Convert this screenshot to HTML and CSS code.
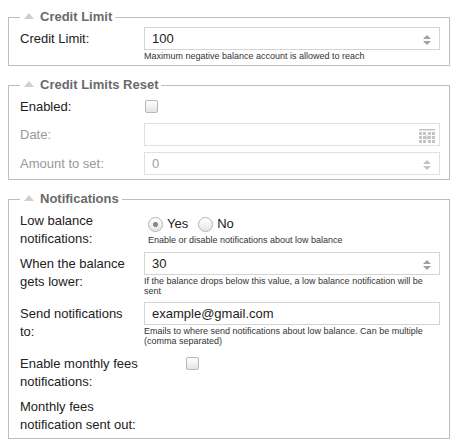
FILE: index.html
```html
<!DOCTYPE html>
<html>
<head>
<meta charset="utf-8">
<link rel="stylesheet" href="styles.css">
</head>
<body>
<div class="page">
  <fieldset class="group">
    <legend class="group-title"><svg class="caret" width="10" height="6" viewBox="0 0 10 6"><polygon points="0,6 5,0 10,6" fill="#cfcfcf"/></svg>Credit Limit</legend>
    <div class="row">
      <div class="row-label">Credit Limit:</div>
      <div class="row-field">
        <div class="input"><span>100</span><svg class="spin" width="8" height="10" viewBox="0 0 8 10"><polygon points="0,4 4,0 8,4" fill="#a0a0a0"/><polygon points="0,6 8,6 4,10" fill="#a0a0a0"/></svg></div>
        <div class="hint">Maximum negative balance account is allowed to reach</div>
      </div>
    </div>
  </fieldset>

  <fieldset class="group">
    <legend class="group-title"><svg class="caret" width="10" height="6" viewBox="0 0 10 6"><polygon points="0,6 5,0 10,6" fill="#cfcfcf"/></svg>Credit Limits Reset</legend>
    <div class="row">
      <div class="row-label">Enabled:</div>
      <div class="row-field">
        <div class="check"><input type="checkbox" class="box"></div>
      </div>
    </div>
    <div class="row">
      <div class="row-label muted">Date:</div>
      <div class="row-field">
        <div class="input disabled"><span></span><svg class="cal" width="16" height="14" viewBox="0 0 16 14"><g fill="#c4c4c4"><rect x="0" y="0" width="16" height="1.5"/><rect x="0" y="3" width="3" height="3"/><rect x="4" y="3" width="3" height="3"/><rect x="9" y="3" width="3" height="3"/><rect x="13" y="3" width="3" height="3"/><rect x="0" y="7" width="3" height="3"/><rect x="4" y="7" width="3" height="3"/><rect x="9" y="7" width="3" height="3"/><rect x="13" y="7" width="3" height="3"/><rect x="0" y="11" width="3" height="3"/><rect x="4" y="11" width="3" height="3"/><rect x="9" y="11" width="3" height="3"/><rect x="13" y="11" width="3" height="3"/><rect x="7.5" y="6" width="1" height="5"/><rect x="6" y="8" width="4" height="1"/></g></svg></div>
      </div>
    </div>
    <div class="row">
      <div class="row-label muted">Amount to set:</div>
      <div class="row-field">
        <div class="input disabled"><span>0</span><svg class="spin" width="8" height="10" viewBox="0 0 8 10"><polygon points="0,4 4,0 8,4" fill="#c4c4c4"/><polygon points="0,6 8,6 4,10" fill="#c4c4c4"/></svg></div>
      </div>
    </div>
  </fieldset>

  <fieldset class="group">
    <legend class="group-title"><svg class="caret" width="10" height="6" viewBox="0 0 10 6"><polygon points="0,6 5,0 10,6" fill="#cfcfcf"/></svg>Notifications</legend>
    <div class="row">
      <div class="row-label">Low balance notifications:</div>
      <div class="row-field">
        <div class="radios">
          <input type="radio" name="low" class="radio" checked><span class="radio-text">Yes</span>
          <input type="radio" name="low" class="radio"><span class="radio-text">No</span>
        </div>
        <div class="hint indented">Enable or disable notifications about low balance</div>
      </div>
    </div>
    <div class="row">
      <div class="row-label">When the balance gets lower:</div>
      <div class="row-field">
        <div class="input"><span>30</span><svg class="spin" width="8" height="10" viewBox="0 0 8 10"><polygon points="0,4 4,0 8,4" fill="#a0a0a0"/><polygon points="0,6 8,6 4,10" fill="#a0a0a0"/></svg></div>
        <div class="hint">If the balance drops below this value, a low balance notification will be<br>sent</div>
      </div>
    </div>
    <div class="row">
      <div class="row-label">Send notifications to:</div>
      <div class="row-field">
        <div class="input"><span>example@gmail.com</span></div>
        <div class="hint">Emails to where send notifications about low balance. Can be multiple<br>(comma separated)</div>
      </div>
    </div>
    <div class="row">
      <div class="row-label">Enable monthly fees notifications:</div>
      <div class="row-field">
        <div class="check shifted"><input type="checkbox" class="box"></div>
      </div>
    </div>
    <div class="row row-last">
      <div class="row-label">Monthly fees notification sent out:</div>
      <div class="row-field"></div>
    </div>
  </fieldset>
</div>
</body>
</html>
```

FILE: styles.css
```css
html, body {
  margin: 0;
  background: #ffffff;
}
body {
  font-family: "Liberation Sans", Arial, sans-serif;
  font-size: 13px;
  color: #222222;
}
.page {
  padding: 9px 9px 0 8px;
}
.group {
  margin: 0 0 11px;
  padding: 2px 9px 2px 11px;
  border: 1px solid #bdbdc6;
  min-width: 0;
}
.group-title {
  padding: 0 3px 0 4px;
  font-weight: bold;
  color: #6a6a6a;
  line-height: 16px;
}
.caret {
  display: inline-block;
  vertical-align: 2px;
  margin-right: 6px;
}
.row {
  display: flex;
}
.row + .row {
  margin-top: 4px;
}
.row-label {
  width: 120px;
  flex: none;
  margin-right: 4px;
  padding-top: 3px;
  line-height: 18px;
}
.row-label.muted {
  color: #999999;
}
.row-field {
  flex: 1;
  min-width: 0;
  padding-bottom: 2px;
}
.row-last {
  padding-bottom: 2px;
}
.input {
  height: 23px;
  box-sizing: border-box;
  border: 1px solid #d4d4d4;
  padding: 0 8px 0 7px;
  display: flex;
  align-items: center;
  justify-content: space-between;
  line-height: 21px;
  color: #222222;
}
.input.disabled {
  border-color: #e0e0e0;
  color: #a0a0a0;
}
.spin {
  display: block;
  margin-top: 3px;
}
.cal {
  display: block;
  margin-right: -4px;
  margin-top: 2px;
}
.hint {
  font-size: 9px;
  line-height: 10px;
  padding-top: 1px;
  color: #333333;
}
.hint.indented {
  padding-left: 4px;
}
.check {
  height: 22px;
  display: flex;
  align-items: center;
}
.check.shifted {
  padding-left: 41px;
}
.box {
  appearance: none;
  -webkit-appearance: none;
  width: 13px;
  height: 13px;
  margin: 0 0 0 1px;
  border: 1px solid #b8b8b8;
  border-radius: 2px;
  background: linear-gradient(#ffffff, #e4e4e4);
  box-sizing: border-box;
}
.radios {
  display: flex;
  align-items: center;
  height: 20px;
  padding: 5px 0 0 4px;
}
.radio {
  appearance: none;
  -webkit-appearance: none;
  width: 15px;
  height: 15px;
  margin: 0 4px 0 0;
  border: 1px solid #b4b4b4;
  border-radius: 50%;
  box-sizing: border-box;
  background: linear-gradient(#ffffff, #e6e6e6);
}
.radio:checked {
  background: radial-gradient(circle, #8a8a8a 0 2.2px, transparent 2.8px), linear-gradient(#ffffff, #e6e6e6);
}
.radio-text {
  margin-right: 10px;
  line-height: 20px;
}
```
